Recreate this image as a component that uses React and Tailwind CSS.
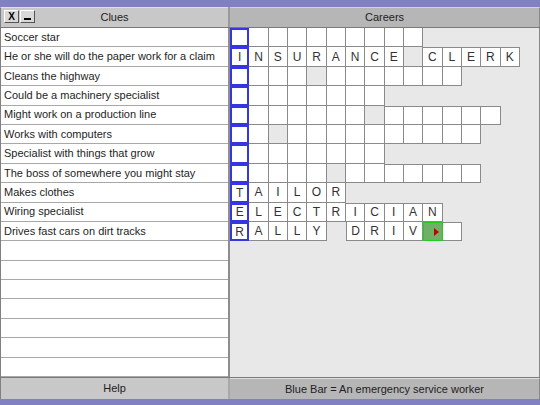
import React from 'react';

const rows = [
  { clue: 'Soccer star', cells: '..........' },
  { clue: 'He or she will do the paper work for a claim', cells: 'INSURANCE#CLERK' },
  { clue: 'Cleans the highway', cells: '....#.......' },
  { clue: 'Could be a machinery specialist', cells: '........' },
  { clue: 'Might work on a production line', cells: '.......#......' },
  { clue: 'Works with computers', cells: '..#..........' },
  { clue: 'Specialist with things that grow', cells: '........' },
  { clue: 'The boss of somewhere you might stay', cells: '.....#.......' },
  { clue: 'Makes clothes', cells: 'TAILOR' },
  { clue: 'Wiring specialist', cells: 'ELECTRICIAN' },
  { clue: 'Drives fast cars on dirt tracks', cells: 'RALLY DRIV*.' },
];

const emptyRows = Array.from({ length: 7 });

function Cell({ ch, col, topLine, leftLine }) {
  if (ch === ' ') return <div className="w-[19.33px] h-full" />;

  if (col === 0) {
    return (
      <div className="w-[19.33px] h-full border-2 border-[#3535e2] bg-white flex items-center justify-center text-[12px] text-[#333]">
        {ch === '.' ? '' : ch}
      </div>
    );
  }

  if (ch === '*') {
    return (
      <div className="relative w-[19.33px] h-full border border-[#22cc22] bg-[#6fb066]">
        <span className="absolute right-[3px] top-1/2 -translate-y-1/2 w-0 h-0 border-y-[4px] border-y-transparent border-l-[5px] border-l-[#c00000]" />
      </div>
    );
  }

  const bg = ch === '#' ? 'bg-[#e8e8e8]' : 'bg-white';
  return (
    <div
      className={`w-[19.33px] h-full border-r border-b border-[#8a8a8a] ${topLine ? 'border-t' : ''} ${leftLine ? 'border-l' : ''} ${bg} flex items-center justify-center text-[12px] text-[#333]`}
    >
      {ch === '.' || ch === '#' ? '' : ch}
    </div>
  );
}

function App() {
  return (
    <div
      className="w-[540px] h-[405px] bg-[#8080c2] flex flex-col overflow-hidden"
      style={{ fontFamily: '"Liberation Sans", Arial, sans-serif' }}
    >
      <div className="h-[7px]" />

      {/* header */}
      <div className="h-[21px] flex border-b border-[#7a7a7a]">
        <div className="w-[228px] bg-[#c8c8c8] border-t border-[#e0e0e0] border-l border-l-[#808080] relative flex items-center justify-center text-[11px] text-[#222]">
          <div className="absolute left-[3px] top-[2px] flex gap-[1px]">
            <div className="w-[15px] h-[13px] bg-[#d8d8d8] border border-t-white border-l-white border-r-[#555] border-b-[#555] flex items-center justify-center text-[10px] font-bold leading-none text-black">
              X
            </div>
            <div className="w-[15px] h-[13px] bg-[#d8d8d8] border border-t-white border-l-white border-r-[#555] border-b-[#555] flex items-end justify-center pb-[2px]">
              <span className="block w-[7px] h-[2px] bg-black" />
            </div>
          </div>
          Clues
        </div>
        <div className="w-[2px] bg-[#9a9a9a]" />
        <div className="flex-1 bg-[#b6b6b6] border-t border-[#d2d2d2] border-r border-r-[#888] flex items-center justify-center text-[11px] text-[#222]">
          Careers
        </div>
      </div>

      {/* body */}
      <div className="h-[349px] flex">
        <div className="w-[228px] bg-white border-l border-[#808080] grid grid-rows-18">
          {rows.map((r) => (
            <div key={r.clue} className="border-b border-[#a8a8a8] flex items-center pl-[3px] text-[11px] text-[#1e1e1e] whitespace-nowrap">
              {r.clue}
            </div>
          ))}
          {emptyRows.map((_, i) => (
            <div key={i} className="border-b border-[#a8a8a8]" />
          ))}
        </div>
        <div className="w-[2px] bg-[#8e8e8e]" />
        <div className="flex-1 bg-[#e8e8e8] border-r border-[#888] grid grid-rows-18">
          {rows.map((r, ri) => {
            const prevLen = ri > 0 ? rows[ri - 1].cells.length : 99;
            return (
              <div key={ri} className="flex h-full">
                {r.cells.split('').map((ch, ci) => (
                  <Cell
                    key={ci}
                    ch={ch}
                    col={ci}
                    topLine={ci >= prevLen}
                    leftLine={ci > 0 && r.cells[ci - 1] === ' '}
                  />
                ))}
              </div>
            );
          })}
        </div>
      </div>

      {/* footer */}
      <div className="h-[22px] flex border-t border-[#7a7a7a]">
        <div className="w-[228px] bg-[#c8c8c8] border-l border-[#808080] flex items-center justify-center text-[11px] text-[#222]">
          Help
        </div>
        <div className="w-[2px] bg-[#a8a8a8]" />
        <div className="flex-1 bg-[#b6b6b6] border-t border-[#e0e0e0] border-r border-r-[#888] flex items-center justify-center text-[11px] text-[#222]">
          Blue Bar = An emergency service worker
        </div>
      </div>
      <div className="flex-1" />
    </div>
  );
}

export default App;
